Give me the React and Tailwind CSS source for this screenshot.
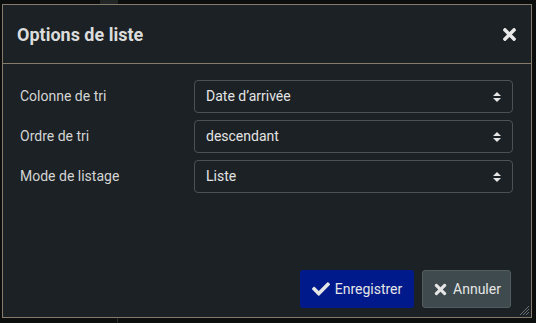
import React from "react";
import { FaCheck, FaTimes } from "react-icons/fa";

const fields = [
  { label: "Colonne de tri", value: "Date d’arrivée" },
  { label: "Ordre de tri", value: "descendant" },
  { label: "Mode de listage", value: "Liste" },
];

const SortArrows = () => (
  <svg width="8" height="10" viewBox="0 0 8 10" className="text-[#e6e6e6]">
    <path d="M0 4 L4 0 L8 4 Z" fill="currentColor" />
    <path d="M0 6 L4 10 L8 6 Z" fill="currentColor" />
  </svg>
);

const App = () => {
  return (
    <div
      className="w-[536px] h-[323px] bg-[#0c0e0e] overflow-hidden pt-[4px] pl-[2px] relative"
      style={{ fontFamily: "Roboto, 'Liberation Sans', sans-serif" }}
    >
      {/* bits of the page behind the dialog */}
      <div className="absolute left-[100px] top-0 w-[18px] h-[4px] bg-[#222626]" />
      <div className="absolute left-[117px] bottom-0 w-px h-[5px] bg-[#2a2e2e]" />

      <div className="w-[530px] h-[314px] bg-[#1b2124] border border-[#857b6a] flex flex-col relative">
        {/* Header */}
        <div className="h-[59px] flex items-center justify-between pl-[14px] pr-[12px] border-b border-[#857b6a]">
          <h2 className="text-[18px] font-bold text-[#dcdcdc]">Options de liste</h2>
          <FaTimes className="text-[#e8e8e8] w-[19px] h-[19px]" />
        </div>

        {/* Body */}
        <div className="flex-1 flex flex-col gap-[7px] pt-[16px] pl-[17px] pr-[18px]">
          {fields.map((f, i) => (
            <div key={i} className="flex items-center">
              <label className="w-[174px] text-[14px] text-[#d4d4d4]">{f.label}</label>
              <div className="flex-1 h-[33px] rounded-[4px] border border-[#4b5154] flex items-center justify-between pl-[11px] pr-[11px]">
                <span className="text-[14px] text-[#e4e4e4]">{f.value}</span>
                <SortArrows />
              </div>
            </div>
          ))}
        </div>

        {/* Footer */}
        <div className="flex justify-end gap-[8px] pr-[20px] pb-[9px]">
          <button className="h-[38px] w-[114px] rounded-[3px] bg-[#001a8c] text-[#e6e6e6] text-[14px] flex items-center justify-center gap-[5px]">
            <FaCheck className="w-[18px] h-[18px]" />
            Enregistrer
          </button>
          <button className="h-[38px] w-[89px] rounded-[3px] bg-[#3e4a4e] border border-[#525d61] text-[#e6e6e6] text-[14px] flex items-center justify-center gap-[4px]">
            <FaTimes className="w-[17px] h-[17px]" />
            Annuler
          </button>
        </div>

        {/* resize grip */}
        <svg width="10" height="10" viewBox="0 0 10 10" className="absolute right-[2px] bottom-[2px]">
          <path d="M10 1 L1 10 M10 4 L4 10 M10 7 L7 10" stroke="#6a6f70" strokeWidth="1" />
        </svg>
      </div>
    </div>
  );
};

export default App;
